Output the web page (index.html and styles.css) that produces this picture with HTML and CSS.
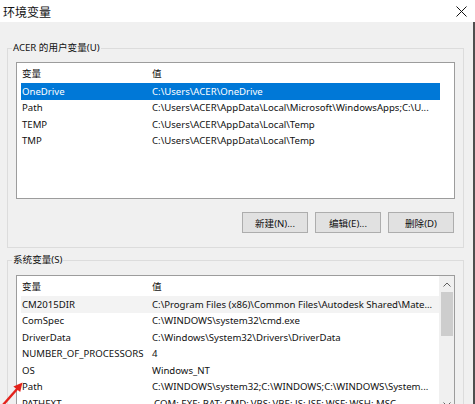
FILE: index.html
```html
<!DOCTYPE html>
<html lang="zh-CN">
<head>
<meta charset="utf-8">
<title>环境变量</title>
<link rel="stylesheet" href="styles.css">
</head>
<body>
<div class="window">
  <div class="titlebar">
    <span class="title">环境变量</span>
    <svg class="close" width="11" height="11" viewBox="0 0 11 11"><path d="M0.5 0.5 L10.5 10.5 M10.5 0.5 L0.5 10.5" stroke="#111" stroke-width="1" fill="none"/></svg>
  </div>
  <div class="body">
    <fieldset class="group user-group">
      <legend>ACER 的用户变量(U)</legend>
      <div class="list user-list">
        <div class="cols">
          <div class="header"><span class="c1">变量</span><span class="c2">值</span></div>
          <div class="row selected"><span class="c1">OneDrive</span><span class="c2">C:\Users\ACER\OneDrive</span></div>
          <div class="row"><span class="c1">Path</span><span class="c2">C:\Users\ACER\AppData\Local\Microsoft\WindowsApps;C:\U...</span></div>
          <div class="row"><span class="c1">TEMP</span><span class="c2">C:\Users\ACER\AppData\Local\Temp</span></div>
          <div class="row"><span class="c1">TMP</span><span class="c2">C:\Users\ACER\AppData\Local\Temp</span></div>
        </div>
      </div>
      <div class="buttons">
        <button class="btn">新建(N)...</button>
        <button class="btn">编辑(E)...</button>
        <button class="btn">删除(D)</button>
      </div>
    </fieldset>
    <fieldset class="group sys-group">
      <legend>系统变量(S)</legend>
      <div class="list sys-list">
        <div class="cols">
          <div class="header"><span class="c1">变量</span><span class="c2">值</span></div>
          <div class="row hover"><span class="c1">CM2015DIR</span><span class="c2">C:\Program Files (x86)\Common Files\Autodesk Shared\Mate...</span></div>
          <div class="row"><span class="c1">ComSpec</span><span class="c2">C:\WINDOWS\system32\cmd.exe</span></div>
          <div class="row"><span class="c1">DriverData</span><span class="c2">C:\Windows\System32\Drivers\DriverData</span></div>
          <div class="row"><span class="c1">NUMBER_OF_PROCESSORS</span><span class="c2">4</span></div>
          <div class="row"><span class="c1">OS</span><span class="c2">Windows_NT</span></div>
          <div class="row"><span class="c1">Path</span><span class="c2">C:\WINDOWS\system32;C:\WINDOWS;C:\WINDOWS\System...</span></div>
          <div class="row"><span class="c1">PATHEXT</span><span class="c2">.COM;.EXE;.BAT;.CMD;.VBS;.VBE;.JS;.JSE;.WSF;.WSH;.MSC</span></div>
        </div>
        <div class="scrollbar">
          <div class="sb-btn"><svg width="8" height="5" viewBox="0 0 8 5"><path d="M0.5 4.5 L4 1 L7.5 4.5" stroke="#606060" stroke-width="1" fill="none"/></svg></div>
          <div class="track"><div class="thumb"></div></div>
          <div class="sb-btn"><svg width="8" height="5" viewBox="0 0 8 5"><path d="M0.5 0.5 L4 4 L7.5 0.5" stroke="#606060" stroke-width="1" fill="none"/></svg></div>
        </div>
      </div>
    </fieldset>
  </div>
  <svg class="annot" width="30" height="30" viewBox="0 0 30 30">
    <path d="M3 31 L17.5 14.5" stroke="#e3221b" stroke-width="2.4" fill="none"/>
    <path d="M22.5 8.5 L20.2 18 L13.4 12.4 Z" fill="#e3221b"/>
  </svg>
</div>
</body>
</html>
```

FILE: styles.css
```css
html, body {
  margin: 0;
  padding: 0;
}
body {
  width: 475px;
  height: 404px;
  overflow: hidden;
  background: #f0f0f0;
  font-family: "Noto Sans", "Noto Sans CJK SC", sans-serif;
  font-size: 9.6px;
  color: #111111;
}
.window {
  position: relative;
  width: 475px;
  height: 404px;
}
.titlebar {
  height: 22px;
  background: #ffffff;
  display: flex;
  align-items: center;
  justify-content: space-between;
  padding: 0 8px 0 3px;
  box-sizing: border-box;
  font-family: "Noto Sans CJK SC", sans-serif;
  font-size: 12px;
  color: #111;
}
.close {
  display: block;
}
.body {
  height: 382px;
  box-sizing: border-box;
  border-right: 2px solid #4f4f4f;
  padding: 18px 0 0 7px;
}
.group {
  margin: 0;
  width: 457px;
  box-sizing: border-box;
  border: 1px solid #dcdcdc;
  padding: 6px 8px 14px 8px;
  min-width: 0;
}
.group legend {
  padding: 0 1px;
  margin-left: -4px;
  line-height: 16px;
}
.sys-group {
  margin-top: 4px;
  padding-top: 7px;
  padding-bottom: 0;
}
.list {
  display: flex;
  background: #ffffff;
  border: 1px solid #9c9c9c;
  box-sizing: border-box;
}
.user-list {
  height: 137px;
}
.sys-list {
  height: 138px;
}
.cols {
  flex: 1;
  min-width: 0;
  overflow: hidden;
}
.header {
  height: 20px;
  display: flex;
  align-items: center;
  padding-left: 4px;
}
.row {
  height: 16.5px;
  width: 419px;
  margin-left: 4px;
  display: flex;
  align-items: center;
}
.c1 {
  width: 129px;
  padding-left: 1px;
  flex: none;
  white-space: nowrap;
  overflow: hidden;
}
.c2 {
  flex: 1;
  padding-left: 1px;
  white-space: nowrap;
  overflow: hidden;
}
.selected {
  background: #0078d7;
  color: #ffffff;
}
.hover {
  background: #f3f3f3;
}
.buttons {
  display: flex;
  justify-content: flex-end;
  gap: 7px;
  margin-top: 13px;
  padding-right: 1px;
}
.btn {
  width: 66px;
  height: 21px;
  margin: 0;
  padding: 0;
  background: #e1e1e1;
  border: 1px solid #adadad;
  font-family: inherit;
  font-size: 9.6px;
  color: #111111;
}
.scrollbar {
  width: 15px;
  flex: none;
  background: #f0f0f0;
  display: flex;
  flex-direction: column;
}
.sb-btn {
  height: 16px;
  display: flex;
  align-items: center;
  justify-content: center;
}
.track {
  flex: 1;
}
.thumb {
  height: 44px;
  margin: 0 1px 0 2px;
  background: #cdcdcd;
}
.annot {
  position: absolute;
  left: 0;
  bottom: 0;
}
```
